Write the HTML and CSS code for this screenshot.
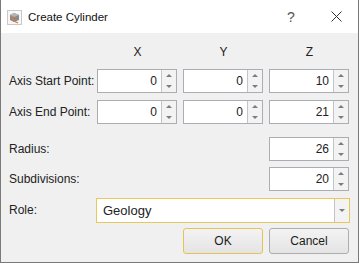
FILE: index.html
```html
<!DOCTYPE html>
<html lang="en">
<head>
  <meta charset="UTF-8">
  <title>Create Cylinder</title>
  <link rel="stylesheet" href="styles.css">
</head>
<body>
  <div class="window">
    <div class="titlebar">
      <svg class="app-icon" width="15" height="15" viewBox="0 0 15 15">
        <rect x="0.5" y="0.5" width="14" height="14" fill="#f7f7f7" stroke="#c9c9c9"/>
        <path d="M3 5 L7 3 L12 5 L12 10 L7 12 L3 10 Z" fill="#8a8a8a"/>
        <path d="M3 5 L7 7 L12 5 L7 3 Z" fill="#b5b5b5"/>
        <path d="M4 6 L7 11 L11 13" fill="none" stroke="#e0783a" stroke-width="1.3"/>
      </svg>
      <span class="title">Create Cylinder</span>
      <span class="tb-btn help">?</span>
      <span class="tb-btn close">
        <svg width="11" height="11" viewBox="0 0 11 11"><path d="M0.5 0.5 L10.5 10.5 M10.5 0.5 L0.5 10.5" stroke="#333" stroke-width="1"/></svg>
      </span>
    </div>

    <div class="content">
      <div class="form">
        <span></span>
        <span class="col-head">X</span>
        <span class="col-head">Y</span>
        <span class="col-head">Z</span>

        <label class="lbl">Axis Start Point:</label>
        <div class="spin"><span class="val">0</span><span class="arrows"><i class="up"></i><i class="down"></i></span></div>
        <div class="spin"><span class="val">0</span><span class="arrows"><i class="up"></i><i class="down"></i></span></div>
        <div class="spin"><span class="val">10</span><span class="arrows"><i class="up"></i><i class="down"></i></span></div>

        <label class="lbl">Axis End Point:</label>
        <div class="spin"><span class="val">0</span><span class="arrows"><i class="up"></i><i class="down"></i></span></div>
        <div class="spin"><span class="val">0</span><span class="arrows"><i class="up"></i><i class="down"></i></span></div>
        <div class="spin"><span class="val">21</span><span class="arrows"><i class="up"></i><i class="down"></i></span></div>

        <label class="lbl">Radius:</label>
        <div class="spin col-z"><span class="val">26</span><span class="arrows"><i class="up"></i><i class="down"></i></span></div>

        <label class="lbl">Subdivisions:</label>
        <div class="spin col-z"><span class="val">20</span><span class="arrows"><i class="up"></i><i class="down"></i></span></div>

        <label class="lbl">Role:</label>
        <div class="combo"><span class="val">Geology</span><span class="drop"><i class="down"></i></span></div>

        <button class="btn default col-y">OK</button>
        <button class="btn">Cancel</button>
      </div>
    </div>
  </div>
</body>
</html>
```

FILE: styles.css
```css
body {
  margin: 0;
  background: #ffffff;
  font-family: "Liberation Sans", Arial, sans-serif;
  font-size: 12px;
  color: #222;
}
.window {
  width: 357px;
  height: 262px;
  border: 1px solid #7a7a7a;
  border-top: none;
  background: #f0f0f0;
  display: flex;
  flex-direction: column;
}
.titlebar {
  height: 33px;
  background: #ffffff;
  display: flex;
  align-items: center;
  padding-left: 6px;
}
.app-icon {
  margin-top: 1px;
}
.title {
  margin-left: 6px;
  font-size: 11.5px;
  color: #111;
}
.tb-btn {
  display: flex;
  align-items: center;
  justify-content: center;
  color: #555;
}
.help {
  margin-left: auto;
  width: 20px;
  font-size: 14px;
  margin-right: 25px;
}
.close {
  width: 20px;
  margin-right: 12px;
}
.content {
  padding: 11px 0 0 8px;
}
/* label column + three coordinate columns */
.form {
  display: grid;
  grid-template-columns: 88px 86px 86px 78px;
  grid-template-rows: 25px 31px 37px 30px 31px 30px 26px;
  align-items: start;
}
.col-head {
  text-align: center;
  width: 81px;
  line-height: 16px;
  color: #222;
}
.col-head:last-child {
  width: 78px;
}
.lbl {
  line-height: 24px;
  white-space: nowrap;
}
.col-z {
  grid-column: 4;
}
.col-y {
  grid-column: 3;
}
.spin {
  display: flex;
  height: 24px;
  width: 80px;
  box-sizing: border-box;
  border: 1px solid #abadb3;
  background: #fff;
}
.spin .val {
  flex: 1;
  text-align: right;
  line-height: 22px;
  padding-right: 4px;
}
.arrows {
  width: 14px;
  border-left: 1px solid #c4c4c4;
  background: #f3f3f3;
  display: flex;
  flex-direction: column;
  align-items: center;
  justify-content: space-around;
}
.up, .down {
  display: block;
  width: 0;
  height: 0;
  border-left: 3px solid transparent;
  border-right: 3px solid transparent;
}
.up {
  border-bottom: 3px solid #7c7c7c;
}
.down {
  border-top: 3px solid #7c7c7c;
}
.combo {
  grid-column: 2 / 5;
  display: flex;
  height: 25px;
  margin-left: -1px;
  margin-right: -3px;
  box-sizing: border-box;
  border: 1px solid #e8c75c;
  background: #fff;
}
.combo .val {
  flex: 1;
  line-height: 23px;
  padding-left: 6px;
  font-size: 13px;
}
.drop {
  width: 14px;
  border-left: 1px solid #c4c4c4;
  background: #f3f3f3;
  display: flex;
  align-items: center;
  justify-content: center;
}
.btn {
  width: 80px;
  height: 26px;
  font-family: inherit;
  font-size: 12px;
  color: #1b1b1b;
  border: 1px solid #adadad;
  border-radius: 3px;
  background: linear-gradient(#f3f3f3, #e4e4e4);
  padding: 0;
}
.btn.default {
  border-color: #e6c251;
}
```
